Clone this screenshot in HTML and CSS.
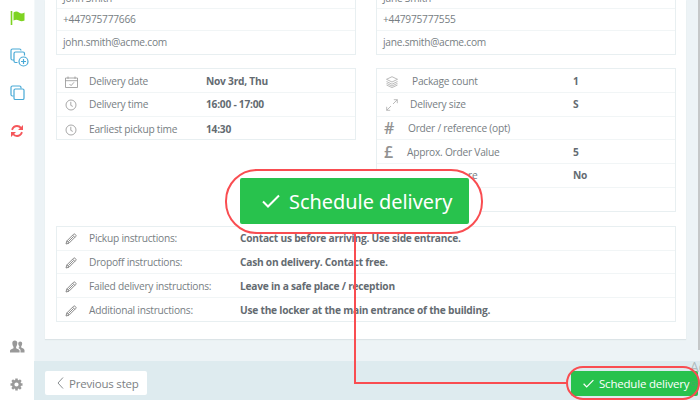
FILE: index.html
```html
<!DOCTYPE html>
<html lang="en">
<head>
<meta charset="utf-8">
<title>Schedule delivery</title>
<link rel="stylesheet" href="styles.css">
</head>
<body>
<svg class="defs" width="0" height="0">
  <symbol id="clock" viewBox="0 0 12 12"><circle cx="6" cy="6" r="5"/><path d="M5.8 2.8v3.6l2 1"/></symbol>
  <symbol id="pencil" viewBox="0 0 12 12"><path d="M1 11l.8-3L8.600 1.200q.7-.6 1.400 0l.8.8q.6.700 0 1.400L4 10.200zM1.800 8L4 10.200M7.700 2.200l2.200 2.200M3.200 8.800l5.300-5.300"/></symbol>
  <symbol id="check" viewBox="0 0 18 14"><path d="M1 7.500l5 5L17 1.500"/></symbol>
</svg>
<div class="app">
  <nav class="sidebar">
    <svg class="flag" width="16" height="16" viewBox="0 0 16 16"><path d="M1.500 1v14" stroke="#7ed321" stroke-width="1.600"/><path d="M3.500 2.500q3-2 5.500 0t5.500 0v8q-3 1.500-5.500 0t-5.500 0z" fill="#7ed321"/></svg>
    <svg class="copy-add" width="20" height="20" viewBox="0 0 20 20"><path d="M3.500 12H2.500q-1.500 0-1.500-1.500v-8Q1 1 2.500 1h7Q11 1 11 2.500M7.500 14.500H5.500q-1.500 0-1.500-1.500V5.500Q4 4 5.500 4h7.500q1.500 0 1.500 1.500v2"/><circle cx="13.500" cy="13.500" r="4.500"/><path d="M13.500 11v5M11 13.500h5"/></svg>
    <svg class="copy" width="16" height="16" viewBox="0 0 16 16"><path d="M3.500 11h-1Q1 11 1 9.500v-7Q1 1 2.500 1h7Q11 1 11 2.500v1"/><rect x="4" y="4" width="10" height="10.500" rx="1.300"/></svg>
    <svg class="refresh" width="14" height="14" viewBox="0 0 14 14"><path d="M2 5.800Q3.500 2 7 2q2.500 0 4 2M12 8.200Q10.500 12 7 12q-2.500 0-4-2" fill="none" stroke="#f5575b" stroke-width="1.900"/><path d="M13 1v5H8zM1 13V8h5z" fill="#f5575b"/></svg>
    <svg class="users" width="15" height="13" viewBox="0 0 15 13"><path d="M0 12.500v-2Q0 9.500 3.500 8.200V7Q2.300 5.500 2.300 3 2.300.500 4.800.5T7.300 3q0 2.500-1.200 4v1.200q3.500 1.300 3.500 2.300v2zM10.500 12.500V10q0-1-2.200-2.100l1-.6v-1Q8.200 5 8.200 3.500q0-2 2-2t2 2q0 1.500-1 2.800v1.200q3.300 1.200 3.300 2.500v2.500z"/></svg>
    <svg class="gear" width="13" height="13" viewBox="0 0 13 13"><circle cx="6.500" cy="6.500" r="3.400" fill="none" stroke="#999" stroke-width="2.600"/><path d="M6.500 .5v2.500M6.500 10V12.500M.5 6.500h2.500M10 6.500H12.500M2.200 2.200l1.400 1.400M9.400 9.400l1.400 1.400M10.800 2.200L9.400 3.600M3.600 9.400l-1.400 1.400" stroke="#999" stroke-width="2.500"/></svg>
  </nav>
  <main class="content">
    <section class="sheet">
      <div class="columns">
        <div class="column">
          <div class="panel contact">
            <div class="row"><span>John Smith</span></div>
            <div class="row"><span>+447975777666</span></div>
            <div class="row"><span>john.smith@acme.com</span></div>
          </div>
          <div class="panel details">
            <div class="row"><svg class="icon calendar" viewBox="0 0 13 12"><path d="M.5 2h12v9.500H.5zM.5 4.700h12M3 .5v2.300M10 .5v2.300M4.500 8l1.600 1.600L9 6.300"/></svg><span class="label">Delivery date</span><b>Nov 3rd, Thu</b></div>
            <div class="row"><svg class="icon"><use href="#clock"/></svg><span class="label">Delivery time</span><b>16:00 - 17:00</b></div>
            <div class="row"><svg class="icon"><use href="#clock"/></svg><span class="label">Earliest pickup time</span><b>14:30</b></div>
          </div>
        </div>
        <div class="column">
          <div class="panel contact">
            <div class="row"><span>Jane Smith</span></div>
            <div class="row"><span>+447975777555</span></div>
            <div class="row"><span>jane.smith@acme.com</span></div>
          </div>
          <div class="panel package">
            <div class="row"><svg class="icon light" viewBox="0 0 12 12"><path d="M6 .7l5.500 2.600L6 6 .5 3.300zM.5 5.500L6 8.200l5.500-2.700M.5 7.300L6 10l5.500-2.700M.5 9L6 11.600 11.500 9"/></svg><span class="label">Package count</span><b>1</b></div>
            <div class="row"><svg class="icon light" viewBox="0 0 12 12"><path d="M7 5l4.300-4.300M7.800.700h3.500v3.500M5 7L.7 11.300M.7 7.800v3.500h3.500"/></svg><span class="label size">Delivery size</span><b>S</b></div>
            <div class="row"><span class="sign">#</span><span class="label ref">Order / reference (opt)</span></div>
            <div class="row"><span class="sign">£</span><span class="label value">Approx. Order Value</span><b>5</b></div>
            <div class="row"><span class="label age">re</span><b>No</b></div>
            <div class="row"></div>
          </div>
        </div>
      </div>
      <div class="panel instructions">
        <div class="row"><svg class="icon"><use href="#pencil"/></svg><span class="label">Pickup instructions:</span><b>Contact us before arriving. Use side entrance.</b></div>
        <div class="row"><svg class="icon"><use href="#pencil"/></svg><span class="label">Dropoff instructions:</span><b>Cash on delivery. Contact free.</b></div>
        <div class="row"><svg class="icon"><use href="#pencil"/></svg><span class="label">Failed delivery instructions:</span><b>Leave in a safe place / reception</b></div>
        <div class="row"><svg class="icon"><use href="#pencil"/></svg><span class="label">Additional instructions:</span><b>Use the locker at the main entrance of the building.</b></div>
      </div>
    </section>
    <footer class="footer">
      <button class="previous"><svg width="7" height="12" viewBox="0 0 7 12"><path d="M6 .5L1 6l5 5.500"/></svg><span>Previous step</span></button>
      <button class="schedule"><svg class="tick" width="11" height="9"><use href="#check"/></svg><span>Schedule delivery</span></button>
    </footer>
  </main>
  <div class="scrollbar"></div>
  <div class="watermark"><span>Ac</span><small>Go</small></div>
  <div class="ring callout">
    <div class="callout-button"><svg class="tick" width="18" height="14"><use href="#check"/></svg><span>Schedule delivery</span></div>
  </div>
  <div class="connector"></div>
  <div class="ring small-ring"></div>
</div>
</body>
</html>
```
FILE: styles.css
```css
* { box-sizing: border-box; }
body { margin: 0; font-family: "Open Sans", "Noto Sans", sans-serif; font-size: 10.2px; letter-spacing: -.24px; color: #777e83; }
svg { flex: none; fill: none; }
.defs { position: absolute; }
.app { position: relative; display: flex; width: 700px; height: 400px; overflow: hidden; background: #edf3f6; }

.sidebar { width: 34px; background: #fff; display: flex; flex-direction: column; align-items: flex-start; padding: 10px 0 0 10px; box-shadow: 1px 0 0 #f4f8f9; }
.copy-add { margin-top: 22px; stroke: #48a9d6; stroke-width: 1.2; }
.copy { margin-top: 17px; stroke: #48a9d6; stroke-width: 1.2; }
.refresh { margin-top: 23px; }
.users { margin-top: 202px; fill: #999; }
.gear { margin-top: 25px; }

.content { width: 666px; display: flex; flex-direction: column; }
.sheet { width: 641px; height: 339px; margin-left: 11px; padding: 0 11px; background: #fff; box-shadow: 0 1px 1px #dce4e7; flex: none; }
.columns { display: flex; gap: 20px; height: 226px; }
.column { width: 300px; flex: none; }
.panel { border: 1px solid #e8eff1; }
.row { display: flex; align-items: center; height: 23.7px; border-bottom: 1px solid #f1f5f6; white-space: nowrap; }
.row:last-child { border-bottom: 0; }
.row b { color: #646b71; }
.contact { height: 55px; border-top: 0; margin-bottom: 13px; }
.contact .row { padding-left: 6px; height: 22px; }
.contact .row:first-child { height: 9px; align-items: flex-end; line-height: 19px; overflow: hidden; }
.contact .row:nth-child(2) span { margin-top: -2px; }
.details { height: 72px; }
.details .row:first-child, .package .row:first-child { height: 24px; padding-top: 1px; }
.icon { width: 12px; height: 12px; margin: 2px 12px 0 8px; stroke: #929292; stroke-width: .8; }
.calendar { width: 13px; margin-right: 11px; }
.icon.light { stroke: #aaa; margin-left: 9px; margin-right: 14px; }
.label { width: 117px; }
.package { height: 144px; }
.package .label { width: 161px; }
.package .size { margin-left: -2px; width: 163px; }
.package .ref { margin-left: -1px; width: 164px; }
.package .value { margin-left: -2px; width: 166px; }
.package .age { padding-left: 91px; width: 196px; }
.sign { width: 25px; padding-left: 7px; margin-right: 7px; font-size: 16px; line-height: 22px; font-weight: 600; color: #929292; }
.instructions { width: 620px; height: 96px; }
.instructions .label { width: 151px; }
.instructions .icon { stroke: #808080; stroke-width: .9; }

.footer { margin-top: 22px; height: 39px; background: #deebef; display: flex; justify-content: space-between; align-items: flex-start; padding: 10px 2px 0 11px; }
button { border: 0; font-family: inherit; font-size: 11.5px; letter-spacing: -.2px; height: 24px; display: flex; align-items: center; padding: 0; border-radius: 2px; white-space: nowrap; }
.previous { width: 102px; background: #fff; color: #7c8184; padding-left: 12px; gap: 5px; }
.previous svg { stroke: #8a8f92; }
.schedule { width: 127px; height: 25px; background: #28c24d; color: #fff; padding-left: 12px; gap: 5px; }
.tick { stroke: #fff; stroke-width: 2; }

.scrollbar { position: absolute; right: 0; top: 0; width: 2px; height: 350px; background: #c5c7c8; }
.watermark { position: absolute; left: 690px; top: 359px; color: rgba(120,130,130,.45); font-size: 14px; line-height: 15px; }
.watermark small { display: block; font-size: 8px; line-height: 18px; }
.connector { position: absolute; left: 354px; top: 233px; width: 214px; height: 151px; border-left: 2px solid #f94d51; border-bottom: 2px solid #f94d51; }
.ring { position: absolute; border: 2px solid #f94d51; }
.small-ring { left: 566px; top: 366px; width: 134px; height: 34px; border-radius: 17px; }
.callout { left: 225px; top: 169px; width: 258px; height: 65px; border-radius: 32px; background: #fff; }
.callout-button { margin: 7px 0 0 13px; width: 229px; height: 46px; border-radius: 2px; background: #28c24d; color: #fff; display: flex; align-items: center; gap: 9px; padding-left: 22px; font-family: "Noto Sans", sans-serif; font-size: 19.9px; letter-spacing: 0; white-space: nowrap; }
```
